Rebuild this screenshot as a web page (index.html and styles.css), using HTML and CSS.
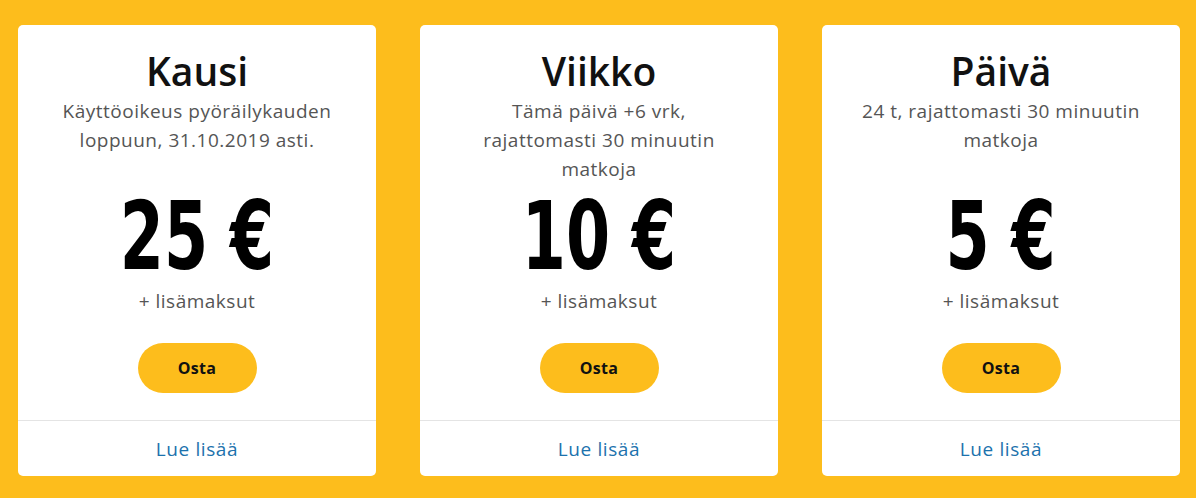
FILE: index.html
```html
<!DOCTYPE html>
<html lang="fi">
<head>
<meta charset="utf-8">
<title>Liput</title>
<link rel="stylesheet" href="styles.css">
</head>
<body>
<main class="plans">
  <section class="card">
    <div class="card-body">
      <h2 class="title">Kausi</h2>
      <p class="desc">Käyttöoikeus pyöräilykauden loppuun, 31.10.2019 asti.</p>
      <div class="price"><span class="price-text">25 €</span></div>
      <p class="extra">+ lisämaksut</p>
      <a class="buy" href="#">Osta</a>
    </div>
    <div class="card-foot"><a class="more" href="#">Lue lisää</a></div>
  </section>
  <section class="card">
    <div class="card-body">
      <h2 class="title">Viikko</h2>
      <p class="desc">Tämä päivä +6 vrk, rajattomasti 30 minuutin matkoja</p>
      <div class="price"><span class="price-text">10 €</span></div>
      <p class="extra">+ lisämaksut</p>
      <a class="buy" href="#">Osta</a>
    </div>
    <div class="card-foot"><a class="more" href="#">Lue lisää</a></div>
  </section>
  <section class="card">
    <div class="card-body">
      <h2 class="title">Päivä</h2>
      <p class="desc">24 t, rajattomasti 30 minuutin matkoja</p>
      <div class="price"><span class="price-text">5 €</span></div>
      <p class="extra">+ lisämaksut</p>
      <a class="buy" href="#">Osta</a>
    </div>
    <div class="card-foot"><a class="more" href="#">Lue lisää</a></div>
  </section>
</main>
</body>
</html>
```

FILE: styles.css
```css
html, body {
  margin: 0;
  padding: 0;
}
body {
  background: #fdbd1c;
  font-family: "Open Sans", "Noto Sans", sans-serif;
  width: 1196px;
  height: 498px;
  overflow: hidden;
}
.plans {
  display: grid;
  grid-template-columns: repeat(3, 358px);
  column-gap: 44px;
  padding: 25px 0 0 18px;
}
.card {
  background: #fff;
  border-radius: 5px;
  height: 451px;
  display: flex;
  flex-direction: column;
}
.card-body {
  flex: 1;
  display: flex;
  flex-direction: column;
  align-items: center;
  text-align: center;
}
.title {
  margin: 23px 0 0;
  font-size: 39px;
  line-height: 46px;
  font-weight: 600;
  color: #111;
}
.desc {
  margin: 3px 0 0;
  width: 284px;
  font-size: 19px;
  letter-spacing: 0.5px;
  line-height: 29px;
  height: 87px;
  color: #555;
}
.price {
  margin-top: 8px;
  height: 90px;
  display: flex;
  justify-content: center;
  align-items: center;
}
.price-text {
  font-family: "DejaVu Sans Condensed", "DejaVu Sans", sans-serif;
  font-weight: 700;
  font-size: 94px;
  line-height: 80px;
  color: #000;
  display: inline-block;
  transform: scaleX(0.75);
  white-space: nowrap;
}
.extra {
  margin: 7px 0 0;
  font-size: 19px;
  letter-spacing: 0.5px;
  line-height: 24px;
  color: #555;
}
.buy {
  margin-top: 30px;
  width: 119px;
  height: 50px;
  border-radius: 25px;
  background: #fdbd1c;
  color: #111;
  font-weight: 700;
  font-size: 16px;
  letter-spacing: 0.3px;
  line-height: 50px;
  text-decoration: none;
}
.card-foot {
  height: 55px;
  border-top: 1px solid #e4e4e4;
  display: flex;
  align-items: center;
  justify-content: center;
}
.more {
  color: #1c72ad;
  font-size: 19px;
  letter-spacing: 0.6px;
  text-decoration: none;
}
```
